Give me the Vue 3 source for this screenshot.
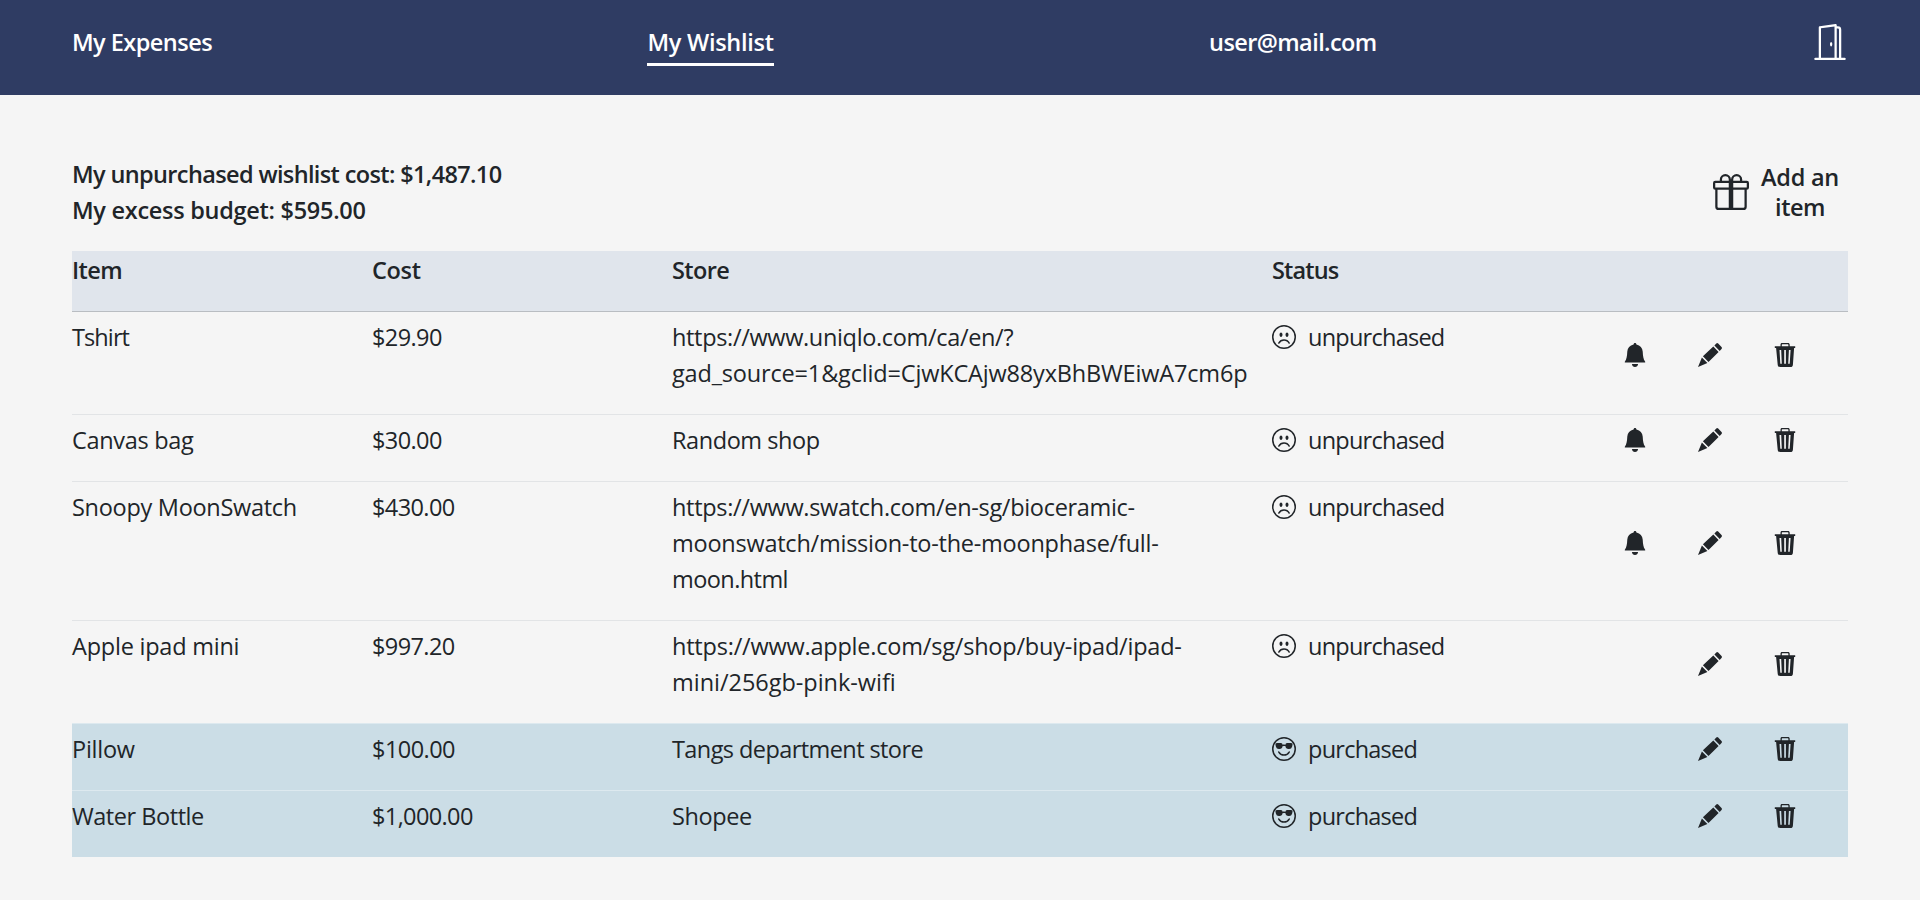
<script setup>
// Each text run carries its own tracking in px: [text, tracking]
const nav = [
  { run: ['My Expenses', -0.53], active: false },
  { run: ['My Wishlist', -0.28], active: true },
  { run: ['user@mail.com', -0.59], active: false },
]
const summary = [
  ['My unpurchased wishlist cost: $1,487.10', -0.63],
  ['My excess budget: $595.00', -0.28],
]
const addLabel = [['Add an', -0.25], ['item', -0.5]]
const headings = [['Item', -0.6], ['Cost', -0.35], ['Store', -0.6], ['Status', -0.85]]

const items = [
  {
    name: ['Tshirt', -0.9], cost: ['$29.90', -0.6], purchased: false, bell: true,
    store: [['https://www.uniqlo.com/ca/en/?', -0.34], ['gad_source=1&gclid=CjwKCAjw88yxBhBWEiwA7cm6p', -0.17]],
  },
  { name: ['Canvas bag', -0.32], cost: ['$30.00', -0.6], purchased: false, bell: true, store: [['Random shop', -0.43]] },
  {
    name: ['Snoopy MoonSwatch', -0.29], cost: ['$430.00', -0.6], purchased: false, bell: true,
    store: [
      ['https://www.swatch.com/en-sg/bioceramic-', -0.31],
      ['moonswatch/mission-to-the-moonphase/full-', -0.24],
      ['moon.html', -0.57],
    ],
  },
  {
    name: ['Apple ipad mini', -0.23], cost: ['$997.20', -0.6], purchased: false, bell: false,
    store: [['https://www.apple.com/sg/shop/buy-ipad/ipad-', -0.21], ['mini/256gb-pink-wifi', -0.03]],
  },
  { name: ['Pillow', -0.25], cost: ['$100.00', -0.55], purchased: true, bell: false, store: [['Tangs department store', -0.58]] },
  { name: ['Water Bottle', -0.45], cost: ['$1,000.00', -0.62], purchased: true, bell: false, store: [['Shopee', -0.42]] },
]
const track = (run) => ({ letterSpacing: run[1] + 'px' })
</script>

<template>
  <div class="page">
    <header class="navbar">
      <a v-for="n in nav" :key="n.run[0]" class="nav-link" :class="{ active: n.active }" :style="track(n.run)">{{ n.run[0] }}</a>
      <svg class="icon-lg" viewBox="0 0 16 16">
        <path d="M8.5 10c-.276 0-.5-.448-.5-1s.224-1 .5-1 .5.448.5 1-.224 1-.5 1" />
        <path d="M10.828.122A.5.5 0 0 1 11 .5V1h.5A1.5 1.5 0 0 1 13 2.5V15h1.5a.5.5 0 0 1 0 1h-13a.5.5 0 0 1 0-1H3V1.5a.5.5 0 0 1 .43-.495l7-1a.5.5 0 0 1 .398.117M11.5 2H11v13h1V2.5a.5.5 0 0 0-.5-.5M4 1.934V15h6V1.077z" />
      </svg>
    </header>

    <main class="content">
      <section class="top">
        <div class="summary">
          <div v-for="s in summary" :key="s[0]" :style="track(s)">{{ s[0] }}</div>
        </div>
        <button class="add">
          <svg class="icon-lg" viewBox="0 0 16 16">
            <path d="M3 2.5a2.5 2.5 0 0 1 5 0 2.5 2.5 0 0 1 5 0v.006c0 .07 0 .27-.038.494H15a1 1 0 0 1 1 1v2a1 1 0 0 1-1 1v7.5a1.5 1.5 0 0 1-1.5 1.5h-11A1.5 1.5 0 0 1 1 14.5V7a1 1 0 0 1-1-1V4a1 1 0 0 1 1-1h2.038A3 3 0 0 1 3 2.506zm1.068.5H7v-.5a1.5 1.5 0 1 0-3 0c0 .085.002.274.045.43zM9 3h2.932l.023-.07c.043-.156.045-.345.045-.43a1.5 1.5 0 0 0-3 0zM1 4v2h6V4zm8 0v2h6V4zm5 3H9v8h4.5a.5.5 0 0 0 .5-.5zm-7 8V7H2v7.5a.5.5 0 0 0 .5.5z" />
          </svg>
          <span class="add-label">
            <span v-for="l in addLabel" :key="l[0]" class="line" :style="track(l)">{{ l[0] }}</span>
          </span>
        </button>
      </section>

      <section class="table">
        <div class="row head">
          <div v-for="h in headings" :key="h[0]" :style="track(h)">{{ h[0] }}</div>
          <div></div>
        </div>
        <div v-for="it in items" :key="it.name[0]" class="row item" :class="{ bought: it.purchased }">
          <div :style="track(it.name)">{{ it.name[0] }}</div>
          <div :style="track(it.cost)">{{ it.cost[0] }}</div>
          <div>
            <span v-for="l in it.store" :key="l[0]" class="line" :style="track(l)">{{ l[0] }}</span>
          </div>
          <div class="status">
            <svg v-if="it.purchased" class="icon" viewBox="0 0 16 16">
              <path d="M4.968 9.75a.5.5 0 1 0-.866.5A4.5 4.5 0 0 0 8 12.5a4.5 4.5 0 0 0 3.898-2.25.5.5 0 1 0-.866-.5A3.5 3.5 0 0 1 8 11.5a3.5 3.5 0 0 1-3.032-1.75M7 5.116V5a1 1 0 0 0-1-1H3.28a1 1 0 0 0-.97 1.243l.311 1.242A2 2 0 0 0 4.561 8H5a2 2 0 0 0 1.994-1.839A3 3 0 0 1 8 6c.393 0 .74.064 1.006.161A2 2 0 0 0 11 8h.438a2 2 0 0 0 1.94-1.515l.311-1.242A1 1 0 0 0 12.72 4H10a1 1 0 0 0-1 1v.116A4.2 4.2 0 0 0 8 5c-.35 0-.69.04-1 .116" />
              <path d="M16 8A8 8 0 1 1 0 8a8 8 0 0 1 16 0m-1 0A7 7 0 1 0 1 8a7 7 0 0 0 14 0" />
            </svg>
            <svg v-else class="icon" viewBox="0 0 16 16">
              <path d="M8 15A7 7 0 1 1 8 1a7 7 0 0 1 0 14m0 1A8 8 0 1 0 8 0a8 8 0 0 0 0 16" />
              <path d="M4.285 12.433a.5.5 0 0 0 .683-.183A3.5 3.5 0 0 1 8 10.5c1.295 0 2.426.703 3.032 1.75a.5.5 0 0 0 .866-.5A4.5 4.5 0 0 0 8 9.5a4.5 4.5 0 0 0-3.898 2.25.5.5 0 0 0 .183.683M7 6.5C7 7.328 6.552 8 6 8s-1-.672-1-1.5S5.448 5 6 5s1 .672 1 1.5m4 0c0 .828-.448 1.5-1 1.5s-1-.672-1-1.5S9.448 5 10 5s1 .672 1 1.5" />
            </svg>
            <span class="status-text">{{ it.purchased ? 'purchased' : 'unpurchased' }}</span>
          </div>
          <div class="actions">
            <svg v-if="it.bell" class="icon" viewBox="0 0 24 24">
              <path d="M12 0c.9 0 1.4.7 1.4 1.5 3.9.8 6 3.6 6.3 7 .3 4.500.5 7.700 2.500 10.200v.8H1.800v-.8c2-2.500 2.200-5.700 2.500-10.200.3-3.400 2.400-6.200 6.300-7C10.600.7 11.100 0 12 0zM8.900 21h6.200c-.2 1.800-1.500 3-3.100 3s-2.900-1.200-3.100-3z" />
            </svg>
            <svg class="icon" viewBox="0 0 24 24">
              <path d="M18.300.6c.6-.7 1.300-.7 1.900 0l3.300 3.500c.6.7.6 1.300 0 1.900l-1.800 1.900-5.300-5.500zM15.300 3.500l5.300 5.500L10.500 18.900l-5.600-5.700zM3.900 14.400l5.500 5.600L0 24z" />
            </svg>
            <svg class="icon" viewBox="0 0 24 24">
              <path fill-rule="evenodd" d="M9 0h6c1 0 1.700.7 1.700 1.700V3.300h5.500v1.600h-1.100L19.900 21.700c-.1 1.400-.9 2.300-2.300 2.300H7c-1.400 0-2.200-.9-2.300-2.300L3.100 4.900H1.800V3.300h5.700V1.700C7.500.7 8.100 0 9 0zM9.300 1.300c-.3 0-.5.200-.5.500v1.500h6.600V1.800c0-.3-.2-.5-.5-.5zM6.500 7l.8 13.700h1.500L8.200 7zM11.200 7v13.700h1.700V7zM15.900 7l-.7 13.700h1.500L17.600 7z" />
            </svg>
          </div>
        </div>
      </section>
    </main>
  </div>
</template>

<style>
body { background: #f5f5f5; }
</style>

<style scoped>
.page {
  min-height: 900px;
  background: #f5f5f5;
  color: #212529;
  font-family: "Open Sans", "Noto Sans", sans-serif;
  font-size: 23.5px;
  line-height: 36px;
}
.navbar {
  box-sizing: border-box;
  height: 95px;
  padding: 24px 72px 0;
  display: flex;
  justify-content: space-between;
  align-items: flex-start;
  background: #2f3c63;
  color: #fff;
  font-weight: 600;
}
.nav-link { padding-bottom: 3px; }
.nav-link.active { border-bottom: 3px solid #fff; }
.icon-lg { width: 36px; height: 36px; fill: currentColor; flex: none; }
.icon { width: 24px; height: 24px; fill: currentColor; flex: none; }
.content { padding: 60px 72px 0; }
.top {
  height: 96px;
  display: flex;
  justify-content: space-between;
  align-items: flex-start;
  font-weight: 600;
}
.summary { padding-top: 1px; }
.add {
  display: flex;
  align-items: center;
  gap: 12px;
  margin: 7px 9px 0 0;
  padding: 0;
  border: 0;
  background: none;
  color: inherit;
  font: inherit;
  line-height: 30px;
}
.add-label { text-align: center; }
.line { display: block; white-space: nowrap; }
.row {
  display: grid;
  grid-template-columns: 300px 300px 600px 300px 276px;
}
.head {
  padding: 1px 0 23px;
  background: #e0e5ec;
  border-bottom: 1px solid #b9bdc2;
  font-weight: 600;
}
.item { padding: 7px 0 23px; }
.item + .item { border-top: 1px solid #e2e4e6; }
.item.bought { background: #cbdde6; border-top-color: #dde9ef; }
.status { display: flex; align-items: center; gap: 12px; height: 36px; }
.status-text { letter-spacing: -0.75px; }
.actions {
  display: flex;
  justify-content: flex-end;
  align-items: center;
  gap: 51px;
  padding-right: 51px;
}
</style>
